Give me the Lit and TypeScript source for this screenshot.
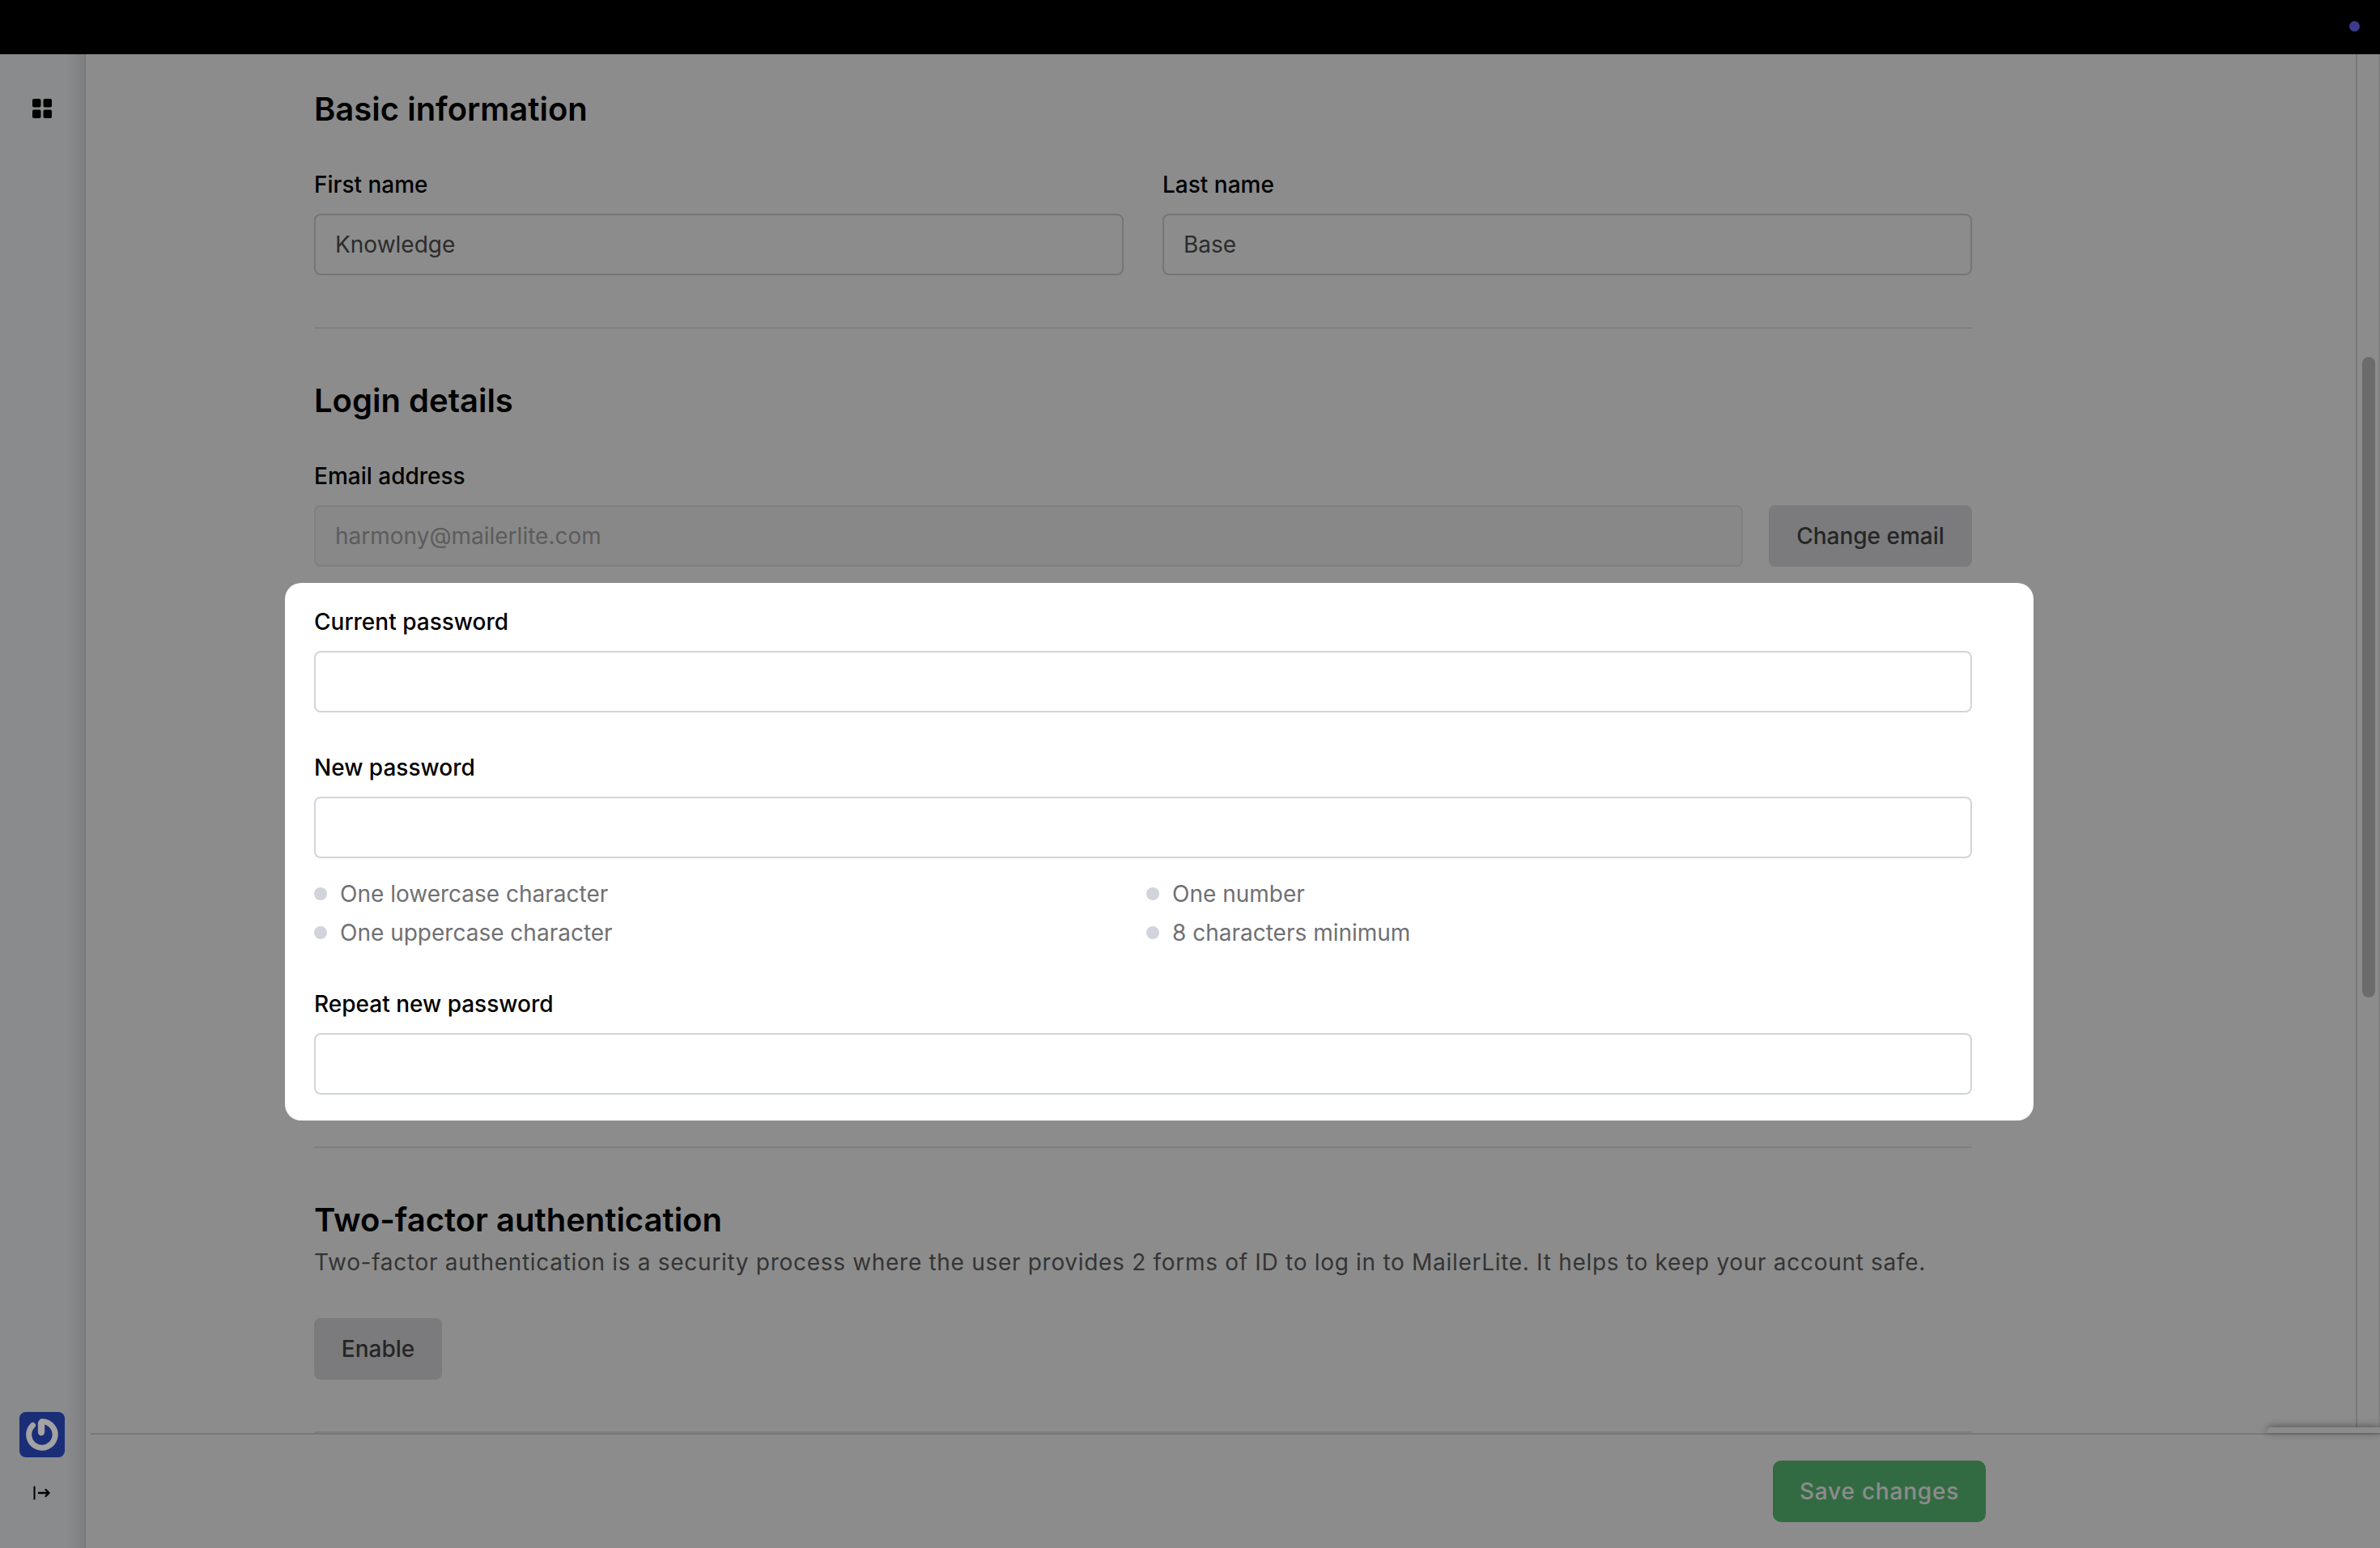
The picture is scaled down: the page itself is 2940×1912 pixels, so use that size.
import { LitElement, html, css } from "lit";
import { customElement } from "lit/decorators.js";

@customElement("app-root")
export class AppRoot extends LitElement {
  static styles = css`
    :host {
      display: block;
      width: 2940px;
      height: 1912px;
      overflow: hidden;
      font-family: Inter, "Liberation Sans", sans-serif;
      background: #fff;
      color: #000;
    }
    * { box-sizing: border-box; }
    .frame { position: relative; display: flex; flex-direction: column; width: 2940px; height: 1912px; }
    .topbar {
      height: 67px; flex: none; background: #000; position: relative; z-index: 20;
      display: flex; align-items: center; justify-content: flex-end; padding-right: 25px;
    }
    .topbar-dot { width: 13px; height: 13px; border-radius: 50%; background: #3b3a8c; margin-top: -3px; }
    .body { flex: 1; min-height: 0; display: flex; }
    .sidebar {
      width: 106px; flex: none; background: linear-gradient(90deg, #fbfdff 0%, #fbfdff 78%, #e6e8ea 100%);
      border-right: 2px solid #d9dbde;
      display: flex; flex-direction: column; align-items: center; padding: 55px 0 59px 0;
    }
    .side-spacer { flex: 1; }
    .grid-icon { width: 24px; height: 24px; display: block; }
    .logo { width: 56px; height: 56px; display: block; margin-bottom: 35px; position: relative; z-index: 11; }
    .expand { width: 22px; height: 18px; display: block; }
    .main { flex: 1; min-width: 0; display: flex; flex-direction: column; }
    .scroll { flex: 1; min-height: 0; display: flex; overflow: hidden; }
    .content { width: 2804px; flex: none; padding: 42px 0 0 282px; }
    .form { width: 2048px; }
    h2 { margin: 0; font-size: 40px; line-height: 52px; font-weight: 600; letter-spacing: 0; color: #000; }
    .row { display: flex; gap: 48px; margin-top: 47px; }
    .field { flex: 1; min-width: 0; }
    .label { display: block; font-size: 28px; line-height: 40px; font-weight: 500; color: #000; margin-bottom: 16px; }
    .input {
      height: 76px; border: 2px solid #d1d5db; border-radius: 8px; background: #fff;
      padding: 0 24px; display: flex; align-items: center; font-size: 28px; color: #505050;
    }
    .input.off { background: #f8f8f8; color: #a8a8a8; border-color: #e8e8e8; flex: 1; }
    .divider { height: 2px; background: #e5e7eb; }
    .d1 { margin-top: 64px; }
    .login { margin-top: 63px; }
    .email { display: flex; gap: 32px; }
    .btn {
      height: 76px; border-radius: 8px; background: #e0e1e3; color: #454545; font-size: 28px; font-weight: 500;
      display: flex; align-items: center; justify-content: center; flex: none;
    }
    .change { width: 251px; }
    .spot {
      position: relative; z-index: 11; background: #fff; border-radius: 20px;
      width: 2160px; margin: 20px 0 0 -36px; padding: 28px 76px 32px 36px;
    }
    .f2 { margin-top: 48px; }
    .f3 { margin-top: 48px; }
    .hints { display: grid; grid-template-columns: 1028px 1fr; row-gap: 8px; margin-top: 24px; }
    .hint { display: flex; align-items: center; gap: 16px; font-size: 28px; line-height: 40px; color: #6f7073; }
    .dot { width: 16px; height: 16px; border-radius: 50%; background: #d1d5db; flex: none; }
    .d2 { margin-top: 32px; }
    .tfa { margin-top: 63px; }
    .desc { margin: 3px 0 0; font-size: 28px; line-height: 46px; color: #5f5f5f; letter-spacing: 0.7px; white-space: nowrap; }
    .enable { width: 158px; margin-top: 46px; }
    .d3 { margin-top: 64px; height: 4px; }
    .rail { flex: 1; position: relative; border-left: 2px solid #d9dbde; border-right: 2px solid #ececec; }
    .thumb { position: absolute; left: 6px; top: 374px; width: 16px; height: 791px; border-radius: 8px; background: #c3c3c3; }
    .footer {
      height: 142px; flex: none; margin-left: 6px; border-top: 2px solid #d9dbde; background: #fff;
      position: relative; display: flex; align-items: center; padding: 0 487px 0 0; justify-content: flex-end;
    }
    .save {
      width: 263px; height: 76px; border-radius: 10px; background: #5cc278; color: #fff; font-size: 28px; font-weight: 500;
      display: flex; align-items: center; justify-content: center; letter-spacing: 0.8px;
    }
    .recaptcha {
      position: absolute; right: 0; bottom: 142px; width: 140px; height: 7px; background: #fff;
      border-top-left-radius: 6px; box-shadow: 0 -1px 10px rgba(0, 0, 0, 0.45);
    }
    .overlay { position: absolute; inset: 67px 0 0 0; background: rgba(0, 0, 0, 0.45); z-index: 10; pointer-events: none; }
  `;

  render() {
    return html`
      <div class="frame">
        <div class="topbar"><div class="topbar-dot"></div></div>
        <div class="body">
          <aside class="sidebar">
            <svg class="grid-icon" viewBox="0 0 24 24" aria-hidden="true">
              <rect x="0" y="0" width="10.5" height="10.5" rx="2" />
              <rect x="13.5" y="0" width="10.5" height="10.5" rx="2" />
              <rect x="0" y="13.5" width="10.5" height="10.5" rx="2" />
              <rect x="13.5" y="13.5" width="10.5" height="10.5" rx="2" />
            </svg>
            <div class="side-spacer"></div>
            <svg class="logo" viewBox="0 0 56 56" aria-hidden="true">
              <rect width="56" height="56" rx="8" fill="#1a2e78" />
              <path d="M16.5 16.5 A16.2 16.2 0 1 0 28 11.8" fill="none" stroke="#a3a3a3" stroke-width="7" stroke-linecap="round" />
              <path d="M27 14 V25" fill="none" stroke="#a3a3a3" stroke-width="8.3" stroke-linecap="round" />
            </svg>
            <svg class="expand" viewBox="0 0 22 18" aria-hidden="true">
              <path d="M1.5 1.5 V16.5" fill="none" stroke="#000" stroke-width="2" stroke-linecap="round" />
              <path d="M7 9 H19.5 M15.5 5 L19.5 9 L15.5 13" fill="none" stroke="#000" stroke-width="2.4" stroke-linecap="round" stroke-linejoin="round" />
            </svg>
          </aside>
          <div class="main">
            <div class="scroll">
              <div class="content">
                <div class="form">
                  <h2>Basic information</h2>
                  <div class="row">
                    <div class="field"><span class="label">First name</span><div class="input">Knowledge</div></div>
                    <div class="field"><span class="label">Last name</span><div class="input">Base</div></div>
                  </div>
                  <div class="divider d1"></div>
                  <h2 class="login">Login details</h2>
                  <div class="row">
                    <div class="field">
                      <span class="label">Email address</span>
                      <div class="email">
                        <div class="input off">harmony@mailerlite.com</div>
                        <div class="btn change">Change email</div>
                      </div>
                    </div>
                  </div>
                  <div class="spot">
                    <div class="field"><span class="label">Current password</span><div class="input"></div></div>
                    <div class="field f2"><span class="label">New password</span><div class="input"></div></div>
                    <div class="hints">
                      <div class="hint"><span class="dot"></span>One lowercase character</div>
                      <div class="hint"><span class="dot"></span>One number</div>
                      <div class="hint"><span class="dot"></span>One uppercase character</div>
                      <div class="hint"><span class="dot"></span>8 characters minimum</div>
                    </div>
                    <div class="field f3"><span class="label">Repeat new password</span><div class="input"></div></div>
                  </div>
                  <div class="divider d2"></div>
                  <h2 class="tfa">Two-factor authentication</h2>
                  <p class="desc">Two-factor authentication is a security process where the user provides 2 forms of ID to log in to MailerLite. It helps to keep your account safe.</p>
                  <div class="btn enable">Enable</div>
                  <div class="divider d3"></div>
                </div>
              </div>
              <div class="rail"><div class="thumb"></div></div>
            </div>
            <div class="footer">
              <div class="save">Save changes</div>
              <div class="recaptcha"></div>
            </div>
          </div>
        </div>
        <div class="overlay"></div>
      </div>
    `;
  }
}
